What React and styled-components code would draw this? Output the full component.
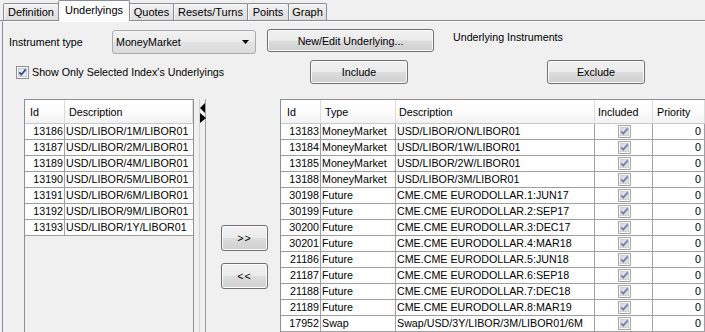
import React from 'react';
import styled, { createGlobalStyle } from 'styled-components';

const Global = createGlobalStyle`
  html, body { margin: 0; padding: 0; background: #f0f0f0; }
  body { font-family: "Liberation Sans", Arial, sans-serif; font-size: 10.7px; color: #000; }
`;

const Root = styled.div`
  width: 705px;
  height: 332px;
  overflow: hidden;
  background: #f0f0f0;
  display: flex;
  flex-direction: column;
`;

const TabStrip = styled.div`
  display: flex;
  align-items: flex-end;
  height: 20px;
  padding-left: 3px;
  border-bottom: 1px solid #898c95;
`;

const Tab = styled.div`
  box-sizing: border-box;
  width: ${p => p.$w}px;
  height: ${p => (p.$active ? 21 : 17)}px;
  margin-bottom: ${p => (p.$active ? -1 : 0)}px;
  margin-left: -1px;
  &:first-child { margin-left: 0; }
  border: 1px solid #898c95;
  border-bottom: none;
  border-radius: 2px 2px 0 0;
  background: ${p => (p.$active ? '#fcfcfc' : 'linear-gradient(#f4f4f4, #e6e6e6 50%, #dedede)')};
  box-shadow: ${p => (p.$active ? 'none' : 'inset 1px 1px 0 #fbfbfb')};
  position: relative;
  z-index: ${p => (p.$active ? 1 : 0)};
  display: flex;
  justify-content: center;
  align-items: center;
  padding-bottom: ${p => (p.$active ? 3 : 0)}px;
  font-size: 11px;
  white-space: nowrap;
`;

const Pane = styled.div`
  flex: 1;
  min-height: 0;
  margin-left: 2px;
  border-left: 1px solid #898c95;
  border-top: 1px solid #fcfcfc;
  display: flex;
  flex-direction: column;
  padding-top: 7px;
`;

const TopRow = styled.div`
  display: flex;
  height: 25px;
  padding-left: 6px;
  align-items: center;
`;

const FieldLabel = styled.div`
  width: ${p => (p.$w ? `${p.$w}px` : 'auto')};
  margin-left: ${p => p.$ml || 0}px;
  align-self: ${p => p.$self || 'center'};
  margin-top: ${p => p.$mt || 0}px;
  white-space: nowrap;
`;

const Select = styled.div`
  box-sizing: border-box;
  width: 144px;
  height: 24px;
  align-self: flex-end;
  border: 1px solid #acacac;
  border-radius: 3px;
  background: linear-gradient(#f2f2f2, #ebebeb 50%, #e2e2e2 51%, #dcdcdc);
  display: flex;
  align-items: center;
  justify-content: space-between;
  padding: 0 6px 0 3px;
`;

const Button = styled.div`
  box-sizing: border-box;
  width: ${p => p.$w}px;
  height: ${p => p.$h}px;
  margin-left: ${p => p.$ml || 0}px;
  align-self: ${p => p.$self || 'center'};
  border: 1px solid #707070;
  border-radius: 3px;
  background: linear-gradient(#f2f2f2 0%, #ebebeb 49%, #dddddd 51%, #cfcfcf 100%);
  box-shadow: inset 0 0 0 1px #fbfbfb;
  display: flex;
  align-items: center;
  justify-content: center;
  white-space: nowrap;
  letter-spacing: ${p => p.$ls || 0}px;
`;

const SecondRow = styled.div`
  display: flex;
  height: 24px;
  margin-top: 6px;
  padding-left: 13px;
  align-items: center;
`;

const CheckGroup = styled.div`
  width: 294px;
  display: flex;
  align-items: center;
  gap: 3px;
  white-space: nowrap;
`;

const TablesArea = styled.div`
  flex: 1;
  min-height: 0;
  margin-top: 15px;
  padding-left: 21px;
  display: flex;
  align-items: stretch;
`;

const Table = styled.div`
  box-sizing: border-box;
  flex: none;
  width: ${p => p.$w}px;
  margin-left: ${p => p.$ml || 0}px;
  border: 1px solid #8f8f8f;
  border-bottom: none;
  background: #f0f0f0;
  overflow: hidden;
`;

const GridRow = styled.div`
  display: grid;
  grid-template-columns: ${p => p.$cols};
`;

const HeadCell = styled.div`
  box-sizing: border-box;
  height: 24px;
  padding-left: ${p => p.$pl || 5}px;
  display: flex;
  align-items: center;
  background: linear-gradient(#ffffff, #fafafa 60%, #f2f2f2);
  border-right: 1px solid #dcdcdc;
  border-bottom: 1px solid #c9c9c9;
  white-space: nowrap;
  overflow: hidden;
`;

const Cell = styled.div`
  box-sizing: border-box;
  height: 16px;
  line-height: 15px;
  background: #fff;
  border-bottom: 1px solid #a0a0a0;
  border-right: ${p => (p.$last ? 'none' : '1px solid #a0a0a0')};
  text-align: ${p => p.$align || 'left'};
  padding: ${p => (p.$align === 'right' ? `0 ${p.$pr || 1}px 0 0` : '0 0 0 1px')};
  white-space: nowrap;
  overflow: hidden;
  display: ${p => (p.$center ? 'flex' : 'block')};
  justify-content: center;
  align-items: center;
`;

const Splitter = styled.div`
  box-sizing: border-box;
  flex: none;
  width: 7px;
  margin-left: 5px;
  border-left: 1px solid #d2d2d2;
  border-right: 1px solid #a0a0a0;
  padding-top: 4px;
  display: flex;
  flex-direction: column;
`;

const MoveColumn = styled.div`
  flex: none;
  width: 47px;
  margin-left: 15px;
  padding-top: 126px;
  display: flex;
  flex-direction: column;
  gap: 12px;
`;

const CheckBox = ({ disabled }) => (
  <svg width="13" height="13" viewBox="0 0 13 13" style={{ display: 'block', flex: 'none' }}>
    <rect x="0.5" y="0.5" width="12" height="12" fill={disabled ? '#f4f4f4' : '#ffffff'} stroke={disabled ? '#a8a8a8' : '#8e8f8f'} />
    <rect x="2.5" y="2.5" width="8" height="8" fill={disabled ? '#dedede' : '#e8ebf0'} stroke={disabled ? '#cfcfcf' : '#c4cbd6'} />
    <path d="M3.2 6.3 L5.3 8.6 L9.8 3.4" fill="none" stroke={disabled ? '#6f84b0' : '#3a5188'} strokeWidth="1.8" />
  </svg>
);

const leftRows = [
  ['13186', 'USD/LIBOR/1M/LIBOR01'],
  ['13187', 'USD/LIBOR/2M/LIBOR01'],
  ['13189', 'USD/LIBOR/4M/LIBOR01'],
  ['13190', 'USD/LIBOR/5M/LIBOR01'],
  ['13191', 'USD/LIBOR/6M/LIBOR01'],
  ['13192', 'USD/LIBOR/9M/LIBOR01'],
  ['13193', 'USD/LIBOR/1Y/LIBOR01'],
];

const rightRows = [
  ['13183', 'MoneyMarket', 'USD/LIBOR/ON/LIBOR01'],
  ['13184', 'MoneyMarket', 'USD/LIBOR/1W/LIBOR01'],
  ['13185', 'MoneyMarket', 'USD/LIBOR/2W/LIBOR01'],
  ['13188', 'MoneyMarket', 'USD/LIBOR/3M/LIBOR01'],
  ['30198', 'Future', 'CME.CME EURODOLLAR.1:JUN17'],
  ['30199', 'Future', 'CME.CME EURODOLLAR.2:SEP17'],
  ['30200', 'Future', 'CME.CME EURODOLLAR.3:DEC17'],
  ['30201', 'Future', 'CME.CME EURODOLLAR.4:MAR18'],
  ['21186', 'Future', 'CME.CME EURODOLLAR.5:JUN18'],
  ['21187', 'Future', 'CME.CME EURODOLLAR.6:SEP18'],
  ['21188', 'Future', 'CME.CME EURODOLLAR.7:DEC18'],
  ['21189', 'Future', 'CME.CME EURODOLLAR.8:MAR19'],
  ['17952', 'Swap', 'Swap/USD/3Y/LIBOR/3M/LIBOR01/6M'],
];

const tabs = [
  ['Definition', 56],
  ['Underlyings', 72],
  ['Quotes', 45],
  ['Resets/Turns', 75],
  ['Points', 42],
  ['Graph', 39],
];

const LEFT_COLS = '40px 128px';
const RIGHT_COLS = '40px 75px 199px 58px 52px';

export default function App() {
  return (
    <Root>
      <Global />
      <TabStrip>
        {tabs.map(([t, w]) => (
          <Tab key={t} $w={w} $active={t === 'Underlyings'}>{t}</Tab>
        ))}
      </TabStrip>
      <Pane>
        <TopRow>
          <FieldLabel $w={103}>Instrument type</FieldLabel>
          <Select>
            <span>MoneyMarket</span>
            <svg width="7" height="4" viewBox="0 0 7 4" style={{ display: 'block' }}>
              <path d="M0 0 H7 L3.5 4 Z" fill="#000" />
            </svg>
          </Select>
          <Button $w={167} $h={23} $ml={11} $self="flex-start">New/Edit Underlying...</Button>
          <FieldLabel $ml={19} $self="flex-start" $mt={2}>Underlying Instruments</FieldLabel>
        </TopRow>
        <SecondRow>
          <CheckGroup>
            <CheckBox />
            <span>Show Only Selected Index's Underlyings</span>
          </CheckGroup>
          <Button $w={98} $h={24}>Include</Button>
          <Button $w={98} $h={24} $ml={139}>Exclude</Button>
        </SecondRow>
        <TablesArea>
          <Table $w={170}>
            <GridRow $cols={LEFT_COLS}>
              <HeadCell>Id</HeadCell>
              <HeadCell $pl={4}>Description</HeadCell>
            </GridRow>
            {leftRows.map(([id, d]) => (
              <GridRow key={id} $cols={LEFT_COLS}>
                <Cell $align="right">{id}</Cell>
                <Cell $last>{d}</Cell>
              </GridRow>
            ))}
          </Table>
          <Splitter>
            <svg width="6" height="20" viewBox="0 0 6 20" style={{ display: 'block' }}>
              <path d="M5 0 V10 L0 5 Z" fill="#000" />
              <path d="M0 10 V20 L6 15 Z" fill="#000" />
            </svg>
          </Splitter>
          <MoveColumn>
            <Button $w={47} $h={26} $ls={1}>&gt;&gt;</Button>
            <Button $w={47} $h={26} $ls={1}>&lt;&lt;</Button>
          </MoveColumn>
          <Table $w={426} $ml={12}>
            <GridRow $cols={RIGHT_COLS}>
              <HeadCell $pl={6}>Id</HeadCell>
              <HeadCell $pl={4}>Type</HeadCell>
              <HeadCell $pl={3}>Description</HeadCell>
              <HeadCell $pl={3}>Included</HeadCell>
              <HeadCell $pl={4}>Priority</HeadCell>
            </GridRow>
            {rightRows.map(([id, type, d]) => (
              <GridRow key={id} $cols={RIGHT_COLS}>
                <Cell $align="right">{id}</Cell>
                <Cell>{type}</Cell>
                <Cell>{d}</Cell>
                <Cell $center><CheckBox disabled /></Cell>
                <Cell $align="right" $pr={3}>0</Cell>
              </GridRow>
            ))}
          </Table>
        </TablesArea>
      </Pane>
    </Root>
  );
}
